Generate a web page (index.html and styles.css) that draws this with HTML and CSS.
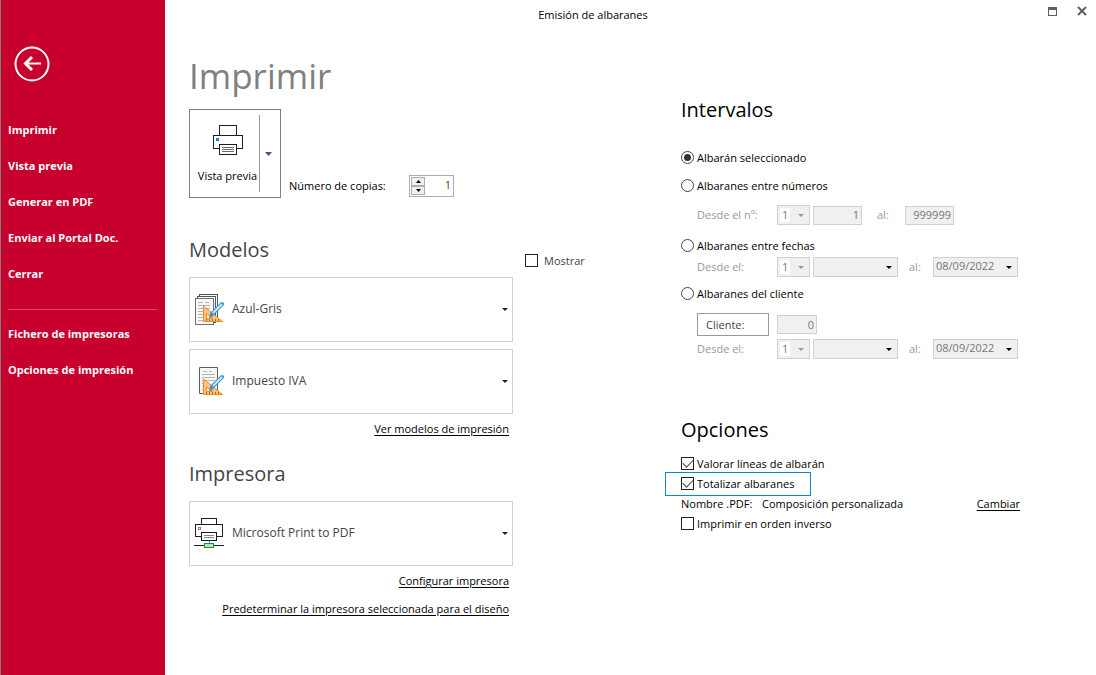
FILE: index.html
```html
<!DOCTYPE html>
<html lang="es">
<head>
<meta charset="utf-8">
<title>Emisión de albaranes</title>
<link rel="stylesheet" href="styles.css">
</head>
<body>
<div class="window">
  <nav class="sidebar">
    <button class="back" type="button" aria-label="Volver">
      <svg width="36" height="36" viewBox="0 0 36 36" fill="none" stroke="#fff"><circle cx="18" cy="18" r="16.5" stroke-width="2"/><path d="M27 17.5H11" stroke-width="2"/><path d="M18 11l-6.5 6.5L18 24" stroke-width="3"/></svg>
    </button>
    <div class="menu">
      <button type="button">Imprimir</button>
      <button type="button">Vista previa</button>
      <button type="button">Generar en PDF</button>
      <button type="button">Enviar al Portal Doc.</button>
      <button type="button">Cerrar</button>
    </div>
    <div class="menu menu-extra">
      <button type="button">Fichero de impresoras</button>
      <button type="button">Opciones de impresión</button>
    </div>
  </nav>

  <div class="main">
    <header class="titlebar">
      <span class="title">Emisión de albaranes</span>
      <div class="controls">
        <button type="button" aria-label="Maximizar"><svg width="10" height="10" viewBox="0 0 10 10" shape-rendering="crispEdges"><path d="M1 1h8v8H1z" fill="none" stroke="#606060"/><path d="M.5 1h9v2.500h-9z" fill="#606060"/></svg></button>
        <button type="button" aria-label="Cerrar ventana"><svg width="10" height="10" viewBox="0 0 10 10"><path d="M1 1l8 8M9 1L1 9" stroke="#606060" stroke-width="2"/></svg></button>
      </div>
    </header>

    <div class="content">
      <section class="left">
        <h1>Imprimir</h1>
        <div class="print-row">
          <div class="split">
            <button class="preview" type="button">
              <svg width="30" height="30" viewBox="0 0 30 30" fill="#fff" stroke="#1e1e1e" shape-rendering="crispEdges"><path d="M6.500 .5h17v10h-17z"/><path d="M.5 10.500h29v13H.5z"/><path d="M6.500 19.500h17v10h-17z"/><path d="M9 22.500h12M9 24.500h12M9 26.500h12" stroke="#6a6a6a"/><path d="M3 13h3v3H3z" fill="#0f87c9" stroke="none"/></svg>
              <span>Vista previa</span>
            </button>
            <button class="split-arrow" type="button" aria-label="Más opciones"><svg width="7" height="4" viewBox="0 0 7 4"><path d="M0 0h7L3.500 4z" fill="#40577f"/></svg></button>
          </div>
          <div class="copies">
            <label for="copies">Número de copias:</label>
            <div class="spinner">
              <div class="steps">
                <button type="button" aria-label="Más copias"><svg width="5" height="3" viewBox="0 0 5 3"><path d="M0 3h5L2.500 0z"/></svg></button>
                <button type="button" aria-label="Menos copias"><svg width="5" height="3" viewBox="0 0 5 3"><path d="M0 0h5L2.500 3z"/></svg></button>
              </div>
              <input id="copies" type="text" value="1">
            </div>
          </div>
        </div>

        <div class="heading-row">
          <h2>Modelos</h2>
          <label class="check show"><input type="checkbox"><span>Mostrar</span></label>
        </div>
        <div class="pickers">
          <button class="picker" type="button">
            <svg width="30" height="31" viewBox="0 0 30 31"><g shape-rendering="crispEdges" fill="#f7f7f7" stroke="#555"><path d="M5.500 .5h18v26h-18z"/><path d="M3.500 2.500h18v26h-18z"/><path d="M1.500 4.500h18v26h-18z" stroke="#707070"/></g><path d="M4 8.500h5M11 8.500h4M4 11.500h12M4 14.500h12M4 17.500h12M4 20.500h12M4 23.500h12M4 26.500h5" stroke="#b5b5b5"/><path d="M9.500 12v15.500h19z" fill="#fbc377" stroke="#ee8d22"/><path d="M12.500 20v4.500h6z" fill="#fff" stroke="#ee8d22"/><path d="M12.500 25v2M15.500 25v2M18.500 25v2M21.500 25v2M24.500 25v2" stroke="#b8621a"/><path d="M18 20L28 10" stroke="#3b95c9" stroke-width="4" stroke-linecap="round"/><path d="M19 19l9-9" stroke="#c9ebfa" stroke-width="2"/><path d="M15 24l1-4 3 3z" fill="#3b95c9"/></svg>
            <span>Azul-Gris</span>
            <svg class="caret" width="6" height="3" viewBox="0 0 6 3"><path d="M0 0h6L3 3z"/></svg>
          </button>
          <button class="picker" type="button">
            <svg width="30" height="29" viewBox="0 0 30 29"><path d="M5.500 .5h18v26h-18z" fill="#f7f7f7" stroke="#606060"/><path d="M9 4.500h4M15 4.500h3M8 7.500h13M8 10.500h13M8 13.500h13M8 16.500h3M8 19.500h3M8 22.500h3" stroke="#b5b5b5"/><path d="M9.500 12v15.500h19z" fill="#fbc377" stroke="#ee8d22"/><path d="M12.500 20v4.500h6z" fill="#fff" stroke="#ee8d22"/><path d="M12.500 25v2M15.500 25v2M18.500 25v2M21.500 25v2M24.500 25v2" stroke="#b8621a"/><path d="M18 20L28 10" stroke="#3b95c9" stroke-width="4" stroke-linecap="round"/><path d="M19 19l9-9" stroke="#c9ebfa" stroke-width="2"/><path d="M15 24l1-4 3 3z" fill="#3b95c9"/></svg>
            <span>Impuesto IVA</span>
            <svg class="caret" width="6" height="3" viewBox="0 0 6 3"><path d="M0 0h6L3 3z"/></svg>
          </button>
        </div>
        <div class="links"><a href="#">Ver modelos de impresión</a></div>

        <div class="heading-row"><h2>Impresora</h2></div>
        <div class="pickers">
          <button class="picker" type="button">
            <svg width="30" height="31" viewBox="0 0 30 31" fill="#fff" stroke="#1e1e1e" shape-rendering="crispEdges"><path d="M7.500 .5h15v6h-15z"/><path d="M1.500 6.500h27v12h-27z"/><path d="M7.500 14.500h15v8h-15z"/><path d="M10 17.500h10M10 19.500h10M4.500 9.500h2v2h-2zM15 23v2" stroke="#858585"/><path d="M0 27.500h30"/><path d="M10.500 25.500h9v4h-9z" fill="#bfe3bf" stroke="#0f9a2c"/></svg>
            <span>Microsoft Print to PDF</span>
            <svg class="caret" width="6" height="3" viewBox="0 0 6 3"><path d="M0 0h6L3 3z"/></svg>
          </button>
        </div>
        <div class="links">
          <a href="#">Configurar impresora</a>
          <a href="#">Predeterminar la impresora seleccionada para el diseño</a>
        </div>
      </section>

      <section class="right">
        <h2>Intervalos</h2>
        <div class="ranges">
          <label class="check"><input type="radio" name="range" checked><span>Albarán seleccionado</span></label>

          <div class="range">
            <label class="check"><input type="radio" name="range"><span>Albaranes entre números</span></label>
            <div class="fields fields-num">
              <label class="from" for="n-series">Desde el nº:</label>
              <span class="drop series"><select id="n-series" disabled><option>1</option></select></span>
              <input class="num" type="text" value="1" aria-label="Desde el número" disabled>
              <label class="to" for="n-to">al:</label>
              <input class="num" id="n-to" type="text" value="999999" disabled>
            </div>
          </div>

          <div class="range">
            <label class="check"><input type="radio" name="range"><span>Albaranes entre fechas</span></label>
            <div class="fields">
              <label class="from" for="f-series">Desde el:</label>
              <span class="drop series"><select id="f-series" disabled><option>1</option></select></span>
              <span class="drop date"><select aria-label="Fecha inicial" disabled><option></option></select></span>
              <label class="to" for="f-to">al:</label>
              <span class="drop date"><select id="f-to" disabled><option>08/09/2022</option></select></span>
            </div>
          </div>

          <div class="range range-client">
            <label class="check"><input type="radio" name="range"><span>Albaranes del cliente</span></label>
            <div class="fields fields-client">
              <button class="client" type="button">Cliente:</button>
              <input class="num code" type="text" value="0" aria-label="Código de cliente" disabled>
            </div>
            <div class="fields">
              <label class="from" for="c-series">Desde el:</label>
              <span class="drop series"><select id="c-series" disabled><option>1</option></select></span>
              <span class="drop date"><select aria-label="Fecha inicial del cliente" disabled><option></option></select></span>
              <label class="to" for="c-to">al:</label>
              <span class="drop date"><select id="c-to" disabled><option>08/09/2022</option></select></span>
            </div>
          </div>
        </div>

        <h2>Opciones</h2>
        <div class="options">
          <label class="check"><input type="checkbox" checked><span>Valorar líneas de albarán</span></label>
          <label class="check focus"><input type="checkbox" checked><span>Totalizar albaranes</span></label>
          <div class="pdf-name"><span class="pdf-label">Nombre .PDF:</span><span class="pdf-value">Composición personalizada</span><a href="#">Cambiar</a></div>
          <label class="check"><input type="checkbox"><span>Imprimir en orden inverso</span></label>
        </div>
      </section>
    </div>
  </div>
</div>
</body>
</html>
```
FILE: styles.css
```css
* { box-sizing: border-box; }

body {
  margin: 0;
  background: #fff;
  color: #000;
  font: 11px/16px "Open Sans", "Noto Sans", sans-serif;
}

button, input, select { font: inherit; color: inherit; margin: 0; padding: 0; border: 0; background: none; border-radius: 0; }
svg { display: block; flex: none; }
a { color: #000; text-decoration: underline; text-underline-offset: 2px; }
label, button, a, .check span { white-space: nowrap; }

.window { display: flex; min-height: 100vh; }

/* Sidebar */
.sidebar {
  flex: none;
  width: 165px;
  padding: 46px 8px 0 7px;
  border-left: 1px solid #808080;
  background: #c8002d;
  color: #fff;
}
.back { display: block; margin: 0 0 30px 6px; }
.menu { display: flex; flex-direction: column; }
.menu button { height: 36px; text-align: left; font-weight: 700; }
.menu-extra { margin-top: 17px; padding-top: 6px; border-top: 1px solid #dc4a6a; }

/* Title bar */
.main { flex: 1; min-width: 0; }
.titlebar { display: flex; align-items: center; height: 30px; }
.title { flex: 1; text-align: center; }
.controls { display: flex; gap: 20px; width: 75px; padding-left: 26px; height: 22px; align-items: center; align-self: flex-start; }

.content { display: flex; padding-left: 24px; }
.left { flex: none; width: 492px; }
.right { flex: 1; padding-top: 66px; }

h1 { margin: 22px 0 9px; font-size: 35px; line-height: 48px; font-weight: 400; color: #808080; }
h2 { margin: 0; font-size: 20px; line-height: 28px; font-weight: 400; }
.left h2 { width: 324px; color: #444; }

/* Print button and copies */
.print-row { display: flex; align-items: flex-end; gap: 8px; margin-bottom: 38px; }
.split { display: flex; width: 92px; height: 89px; border: 1px solid #808080; padding: 5px 0; }
.preview { width: 70px; display: flex; flex-direction: column; align-items: center; gap: 13px; padding: 10px 0 0 6px; border-right: 1px solid #999; }
.split-arrow { flex: 1; display: flex; align-items: center; padding-left: 5px; }
.copies { display: flex; align-items: center; justify-content: space-between; width: 165px; padding-bottom: 1px; }
.spinner { display: flex; width: 45px; height: 22px; border: 1px solid #adadad; padding: 1px; }
.steps { display: flex; flex-direction: column; width: 14px; flex: none; }
.steps button { flex: 1; display: flex; align-items: center; justify-content: center; border: 1px solid #adadad; background: #f0f0f0; }
.spinner input { width: 28px; min-width: 0; padding: 0 1px 2px; text-align: right; color: #444; }

/* Model and printer pickers */
.heading-row { display: flex; align-items: center; gap: 12px; margin-bottom: 13px; }
.pickers { display: flex; flex-direction: column; gap: 7px; width: 324px; }
.picker { display: flex; align-items: center; gap: 8px; height: 65px; padding: 0 4px; border: 1px solid #d0d0d0; color: #444; text-align: left; font-size: 12px; }
.picker span { flex: 1; padding-bottom: 2px; }
.caret { fill: #222; }
.links { display: flex; flex-direction: column; align-items: flex-end; gap: 12px; width: 320px; margin: 7px 0 23px; }

/* Radios and tick boxes */
.check { display: flex; align-items: center; height: 16px; gap: 3px; }
.check input { appearance: none; flex: none; width: 13px; height: 13px; margin-bottom: 1px; border: 1px solid #222; background: #fff; display: grid; place-items: center; }
.check input[type="radio"] { border-radius: 50%; border-color: #444; }
.check input[type="radio"]:checked::before { content: ""; width: 7px; height: 7px; border-radius: 50%; background: #333; }
.check input[type="checkbox"]:checked::before { content: ""; width: 9px; height: 5px; margin-bottom: 3px; border: solid #444; border-width: 0 0 1px 1px; transform: rotate(-45deg); }
.show { align-self: flex-end; gap: 6px; margin-bottom: -5px; color: #444; }

/* Ranges */
.ranges { display: flex; flex-direction: column; gap: 12px; margin: 26px 0 57px; }
.range-client { margin-top: -3px; }
.fields { display: flex; align-items: center; gap: 3px; padding-left: 16px; margin-top: 3px; color: #999; }
.fields-num { margin: 11px 0 1px; }
.fields-client { margin-top: 11px; }
.from { width: 77px; }
.to { width: 21px; margin-left: 8px; }
.fields-num .to { width: 25px; margin-left: 12px; }
.num { width: 49px; height: 19px; padding: 0 2px 1px; border: 1px solid #d0d0d0; background: #f0f0f0; color: #777; text-align: right; }
.code { width: 40px; }
.drop { position: relative; height: 20px; }
.drop select { appearance: none; display: block; width: 100%; height: 20px; padding: 0 0 2px 2px; border: 1px solid #d0d0d0; background: #f0f0f0; color: #777; opacity: 1; line-height: 16px; }
.drop::after { content: ""; position: absolute; right: 6px; top: 9px; border: 3px solid transparent; border-top-color: #000; border-bottom: 0; }
.series { width: 33px; }
.series select { padding: 0 0 0 4px; background: linear-gradient(#fff, #fff) 2px 2px / 10px 14px no-repeat #f0f0f0; }
.series::after { border-top-color: #999; }
.date { width: 85px; }
.client { width: 72px; height: 23px; margin-right: 5px; padding-left: 8px; border: 1px solid #999; color: #444; text-align: left; }

/* Options */
.options { display: flex; flex-direction: column; margin-top: 10px; }
.options > * { height: 20px; }
.options .focus { align-self: flex-start; height: 24px; margin: -2px 0 -2px -16px; padding: 0 16px 0 15px; border: 1px solid #0f87c9; }
.pdf-name { display: flex; align-items: center; width: 339px; }
.pdf-label { width: 81px; }
.pdf-value { flex: 1; }
```
